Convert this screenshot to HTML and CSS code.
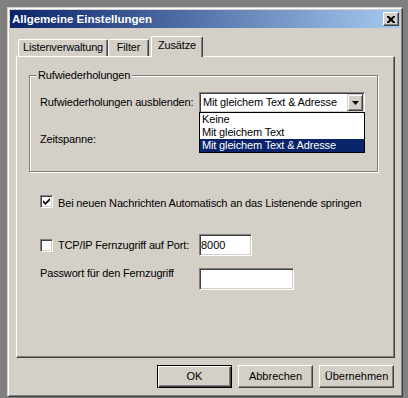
FILE: index.html
```html
<!DOCTYPE html>
<html lang="de">
<head>
    <meta charset="UTF-8">
    <title>Allgemeine Einstellungen</title>
    <link rel="stylesheet" href="styles.css">
</head>
<body>
    <div class="dialog">
        <div class="titlebar">
            <span class="title">Allgemeine Einstellungen</span>
            <span class="close-btn">
                <svg width="8" height="7" viewBox="0 0 8 7"><path d="M0 0h2l2 2 2-2h2v1l-2.5 2.5 2.5 2.5v1h-2l-2-2-2 2h-2v-1l2.5-2.5-2.5-2.5z"/></svg>
            </span>
        </div>
        <div class="client">
            <div class="tabs">
                <div class="tab tab-1">Listenverwaltung</div>
                <div class="tab tab-2">Filter</div>
                <div class="tab tab-3 active">Zusätze</div>
            </div>
            <div class="panel">
                <div class="group">
                    <div class="group-title">Rufwiederholungen</div>
                    <div class="row combo-row">
                        <span class="label">Rufwiederholungen ausblenden:</span>
                        <div class="combo">
                            <span class="combo-text">Mit gleichem Text &amp; Adresse</span>
                            <span class="combo-btn">
                                <svg width="7" height="4" viewBox="0 0 7 4"><path d="M0 0h7l-3.5 4z"/></svg>
                            </span>
                            <ul class="combo-list">
                                <li>Keine</li>
                                <li>Mit gleichem Text</li>
                                <li class="selected">Mit gleichem Text &amp; Adresse</li>
                            </ul>
                        </div>
                    </div>
                    <div class="row time-row">
                        <span class="label">Zeitspanne:</span>
                    </div>
                </div>

                <label class="check-row jump-row">
                    <span class="checkbox">
                        <svg width="7" height="7" viewBox="0 0 7 7"><path d="M0 2.2l2.4 2.4 4.6-4.6v2.4l-4.6 4.6-2.4-2.4z"/></svg>
                    </span>
                    <span class="check-text">Bei neuen Nachrichten Automatisch an das Listenende springen</span>
                </label>

                <div class="row port-row">
                    <label class="check-row">
                        <span class="checkbox"></span>
                        <span>TCP/IP Fernzugriff auf Port:</span>
                    </label>
                    <input class="edit port" type="text" value="8000">
                </div>

                <div class="row pw-row">
                    <span class="label">Passwort für den Fernzugriff</span>
                    <input class="edit pw" type="text" value="">
                </div>
            </div>
            <div class="buttons">
                <button class="btn default">OK</button>
                <button class="btn">Abbrechen</button>
                <button class="btn">Übernehmen</button>
            </div>
        </div>
    </div>
</body>
</html>
```

FILE: styles.css
```css
* {
    margin: 0;
    padding: 0;
    box-sizing: border-box;
}

body {
    background: #808080;
    font: 11px "Liberation Sans", Arial, sans-serif;
    line-height: 13px;
    letter-spacing: -0.15px;
    color: #000;
}

.dialog {
    display: flex;
    flex-direction: column;
    margin: 7px 0 0 7px;
    width: 396px;
    height: 390px;
    padding: 2px;
    background: #d4d0c8;
    border: 1px solid;
    border-color: #d4d0c8 #404040 #404040 #d4d0c8;
    box-shadow: inset 1px 1px #fff, inset -1px -1px #808080;
}

.titlebar {
    display: flex;
    align-items: center;
    justify-content: space-between;
    height: 18px;
    padding: 0 1px 0 2px;
    background: linear-gradient(to right, #0a246a, #a6caf0);
}

.title {
    color: #fff;
    font-weight: bold;
    font-size: 11.5px;
    letter-spacing: 0;
}

.close-btn {
    display: flex;
    align-items: center;
    justify-content: center;
    width: 16px;
    height: 14px;
    background: #d4d0c8;
    border: 1px solid;
    border-color: #fff #404040 #404040 #fff;
    box-shadow: inset -1px -1px #808080;
}

.close-btn svg {
    margin: 0 1px 0 0;
}

.client {
    display: flex;
    flex-direction: column;
    padding: 8px 5px 0 6px;
}

/* Reiter */
.tabs {
    position: relative;
    z-index: 1;
    display: flex;
    align-items: flex-end;
    height: 20px;
    padding-left: 2px;
}

.tab {
    height: 17px;
    padding-top: 1px;
    text-align: center;
    background: #d4d0c8;
    border: 1px solid;
    border-color: #fff #404040 transparent #fff;
    border-bottom: none;
    border-radius: 2px 2px 0 0;
    box-shadow: inset -1px 0 #808080;
}

.tab-1 {
    width: 90px;
}

.tab-2 {
    width: 41px;
}

.tab-3 {
    width: 52px;
    margin-left: 2px;
}

.tab.active {
    height: 21px;
    margin-bottom: -1px;
    padding-top: 2px;
}

.panel {
    display: flex;
    flex-direction: column;
    height: 302px;
    padding: 18px 0 0 12px;
    border: 1px solid;
    border-color: #fff #404040 #404040 #fff;
    box-shadow: inset -1px -1px #808080;
}

/* Gruppe */
.group {
    display: flex;
    flex-direction: column;
    width: 349px;
    height: 97px;
    padding-left: 10px;
    border: 1px solid #808080;
    box-shadow: inset 1px 1px #fff, 1px 1px #fff;
}

.group-title {
    align-self: flex-start;
    margin: -7px 0 0 -4px;
    padding: 0 2px;
    background: #d4d0c8;
}

.row {
    display: flex;
    align-items: center;
}

.label {
    width: 159px;
}

.combo-row {
    margin-top: 10px;
    height: 21px;
}

.time-row {
    margin-top: 16px;
    height: 21px;
}

.combo {
    position: relative;
    display: flex;
    align-items: center;
    width: 166px;
    height: 21px;
    padding: 1px;
    background: #fff;
    border: 1px solid;
    border-color: #808080 #fff #fff #808080;
    box-shadow: inset 1px 1px #404040, inset -1px -1px #d4d0c8;
}

.combo-text {
    flex: 1;
    padding-left: 2px;
}

.combo-btn {
    display: flex;
    align-items: center;
    justify-content: center;
    align-self: stretch;
    width: 16px;
    background: #d4d0c8;
    border: 1px solid;
    border-color: #d4d0c8 #404040 #404040 #d4d0c8;
    box-shadow: inset 1px 1px #fff, inset -1px -1px #808080;
}

.combo-list {
    position: absolute;
    z-index: 2;
    top: 19px;
    left: -1px;
    width: 166px;
    list-style: none;
    background: #fff;
    border: 1px solid #000;
}

.combo-list li {
    padding-left: 2px;
    white-space: nowrap;
}

.combo-list .selected {
    background: #0a246a;
    color: #fff;
}

/* Kontrollkästchen und Eingabefelder */
.check-row {
    display: flex;
    align-items: center;
}

.checkbox {
    display: flex;
    align-items: center;
    justify-content: center;
    flex: none;
    width: 13px;
    height: 13px;
    margin-right: 5px;
    background: #fff;
    border: 1px solid;
    border-color: #808080 #fff #fff #808080;
    box-shadow: inset 1px 1px #404040, inset -1px -1px #d4d0c8;
}

.jump-row {
    align-items: flex-start;
    margin: 23px 0 0 11px;
    height: 13px;
}

.check-text {
    margin-top: 2px;
}

.port-row {
    margin: 26px 0 0 11px;
    height: 22px;
}

.port-row .check-row {
    width: 159px;
}

.pw-row {
    align-items: flex-start;
    margin: 12px 0 0 11px;
}

.pw-row .label {
    margin-top: -1px;
}

.edit {
    height: 22px;
    padding: 0 1px;
    font: inherit;
    background: #fff;
    border: 1px solid;
    border-color: #808080 #fff #fff #808080;
    box-shadow: inset 1px 1px #404040, inset -1px -1px #d4d0c8;
    outline: none;
}

.edit.port {
    width: 53px;
}

.edit.pw {
    width: 95px;
}

/* Schaltflächen */
.buttons {
    display: flex;
    justify-content: flex-end;
    gap: 6px;
    margin-top: 7px;
    padding-right: 1px;
}

.btn {
    width: 75px;
    height: 23px;
    font: inherit;
    line-height: 13px;
    background: #d4d0c8;
    border: 1px solid;
    border-color: #fff #404040 #404040 #fff;
    box-shadow: inset -1px -1px #808080;
}

.btn.default {
    border-color: #000;
    box-shadow: inset 1px 1px #fff, inset -1px -1px #404040, inset -2px -2px #808080;
}
```
